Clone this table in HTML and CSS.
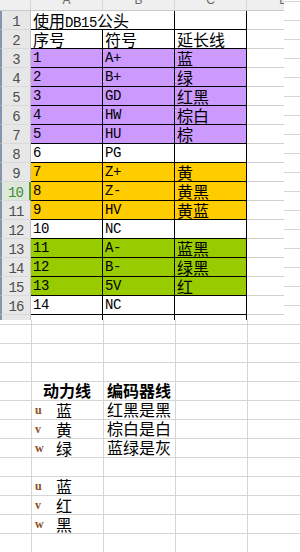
FILE: index.html
```html
<!DOCTYPE html>
<html>
<head>
<meta charset="utf-8">
<link rel="stylesheet" href="styles.css">
</head>
<body>
<div class="page">
  <div class="sheet">
    <div class="ch"></div><div class="ch"><span>A</span></div><div class="ch"><span>B</span></div><div class="ch"><span>C</span></div><div class="ch last"><span>D</span></div>

    <div class="rh">1</div><div class="c noright title">使用<span class="lat">DB15</span>公头</div><div class="c"></div><div class="c"></div><div class="d"></div>
    <div class="rh">2</div><div class="c">序号</div><div class="c">符号</div><div class="c">延长线</div><div class="d"></div>

    <div class="rh">3</div><div class="c pu lat">1</div><div class="c pu lat">A+</div><div class="c pu">蓝</div><div class="d"></div>
    <div class="rh">4</div><div class="c pu lat">2</div><div class="c pu lat">B+</div><div class="c pu">绿</div><div class="d"></div>
    <div class="rh">5</div><div class="c pu lat">3</div><div class="c pu lat">GD</div><div class="c pu">红黑</div><div class="d"></div>
    <div class="rh">6</div><div class="c pu lat">4</div><div class="c pu lat">HW</div><div class="c pu">棕白</div><div class="d"></div>
    <div class="rh">7</div><div class="c pu lat">5</div><div class="c pu lat">HU</div><div class="c pu">棕</div><div class="d"></div>
    <div class="rh">8</div><div class="c lat">6</div><div class="c lat">PG</div><div class="c"></div><div class="d"></div>

    <div class="rh">9</div><div class="c or lat">7</div><div class="c or lat">Z+</div><div class="c or">黄</div><div class="d"></div>
    <div class="rh sel">10</div><div class="c or lat">8</div><div class="c or lat">Z-</div><div class="c or">黄黑</div><div class="d"></div>
    <div class="rh">11</div><div class="c or lat">9</div><div class="c or lat">HV</div><div class="c or">黄蓝</div><div class="d"></div>
    <div class="rh">12</div><div class="c lat">10</div><div class="c lat">NC</div><div class="c"></div><div class="d"></div>

    <div class="rh">13</div><div class="c gr lat">11</div><div class="c gr lat">A-</div><div class="c gr">蓝黑</div><div class="d"></div>
    <div class="rh">14</div><div class="c gr lat">12</div><div class="c gr lat">B-</div><div class="c gr">绿黑</div><div class="d"></div>
    <div class="rh">15</div><div class="c gr lat">13</div><div class="c gr lat">5V</div><div class="c gr">红</div><div class="d"></div>
    <div class="rh">16</div><div class="c lat">14</div><div class="c lat">NC</div><div class="c"></div><div class="d"></div>

    <div class="rh tail"></div><div class="c open"></div><div class="c open"></div><div class="c open"></div><div class="d open"></div>
  </div>

  <div class="notes">
    <div class="nrow">
      <div class="na head">动力线</div>
      <div class="nb head">编码器线</div>
    </div>
    <div class="nrow">
      <div class="na"><span class="ph">u</span><span>蓝</span></div>
      <div class="nb">红黑是黑</div>
    </div>
    <div class="nrow">
      <div class="na"><span class="ph">v</span><span>黄</span></div>
      <div class="nb">棕白是白</div>
    </div>
    <div class="nrow">
      <div class="na"><span class="ph">w</span><span>绿</span></div>
      <div class="nb">蓝绿是灰</div>
    </div>
    <div class="nrow"></div>
    <div class="nrow">
      <div class="na"><span class="ph">u</span><span>蓝</span></div>
    </div>
    <div class="nrow">
      <div class="na"><span class="ph">v</span><span>红</span></div>
    </div>
    <div class="nrow">
      <div class="na"><span class="ph">w</span><span>黑</span></div>
    </div>
  </div>
</div>
</body>
</html>
```

FILE: styles.css
```css
html, body {
  margin: 0;
  padding: 0;
  background: #fff;
}

.page {
  width: 300px;
  height: 552px;
  overflow: hidden;
  background-color: #fff;
  background-image:
    linear-gradient(to bottom, #d5d5d5 1px, transparent 1px),
    linear-gradient(to right, #d5d5d5 1px, transparent 1px);
  background-size: 100% 19px, 72px 100%;
  background-position: 0 1px, 31px 0;
  font-family: "Noto Sans CJK SC", sans-serif;
  font-size: 16px;
  color: #000;
}

.sheet {
  display: grid;
  grid-template-columns: 31px 72px 72px 72px 37px;
  grid-template-rows: 11px repeat(16, 19px) 5px;
  width: 284px;
  background: #fff;
}

/* column header strip (only the lower edge of the letters shows) */
.ch {
  background: #efefef;
  border-bottom: 1px solid #c9c9c9;
  border-right: 1px solid #d6d6d6;
  overflow: hidden;
  text-align: center;
  color: #6a6a6a;
  font: 12px/14px "Liberation Sans", sans-serif;
}
.ch span {
  display: block;
  margin-top: -7px;
}
.ch.last {
  border-right: none;
  text-align: right;
}
.ch.last span {
  margin-right: -4px;
}

/* row headers */
.rh {
  background: #e7e7e7;
  border-left: 2px solid #8595ab;
  border-right: 1px solid #c2c2c2;
  border-bottom: 1px solid #d9d9d9;
  color: #4d4d4d;
  font: 14px/19px "Liberation Mono", monospace;
  letter-spacing: -1px;
  text-align: center;
  padding-top: 2px;
  box-sizing: border-box;
}
.rh.sel {
  background: #dde8da;
  color: #3c8c30;
  border-right: 2px solid #4f9c3c;
}
.rh.tail {
  border-bottom: none;
}

/* data cells */
.c {
  border-right: 1px solid #000;
  border-bottom: 1px solid #000;
  padding-left: 2px;
  line-height: 18px;
  white-space: nowrap;
}
.c.noright {
  border-right: none;
}
.c.open {
  border-bottom: none;
}
.title {
  position: relative;
  z-index: 1;
}
.d {
  border-bottom: 1px solid #cfcfcf;
}
.d.open {
  border-bottom: none;
}

.lat {
  font-family: "Liberation Mono", monospace;
  font-size: 14px;
  letter-spacing: -0.4px;
}
.c.lat {
  padding-top: 1px;
  line-height: 17px;
}

.pu { background: #cc99ff; }
.or { background: #ffcc00; }
.gr { background: #99cc00; }

/* notes below */
.notes {
  padding-top: 61px;
  display: flex;
  flex-direction: column;
}
.nrow {
  height: 19px;
  display: grid;
  grid-template-columns: 31px 72px 72px;
  line-height: 19px;
}
.na {
  grid-column: 2;
  display: flex;
  align-items: center;
}
.nb {
  grid-column: 3;
  padding-left: 4px;
  white-space: nowrap;
}
.na.head {
  justify-content: center;
}
.head {
  font-weight: 700;
}
.ph {
  width: 25px;
  padding-left: 4px;
  padding-top: 1px;
  box-sizing: border-box;
  font: 700 12px/19px "Liberation Serif", serif;
  color: #8a4f1e;
}
```
